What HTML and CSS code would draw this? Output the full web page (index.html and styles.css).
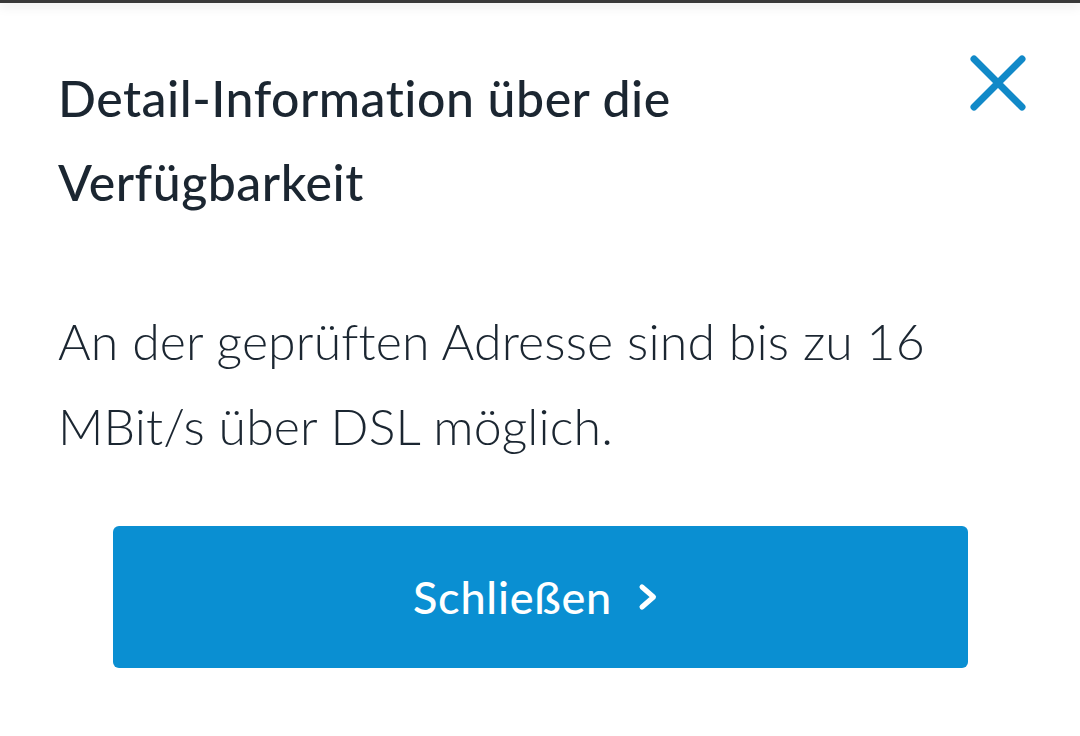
FILE: index.html
```html
<!DOCTYPE html>
<html lang="de">
<head>
<meta charset="utf-8">
<title>Detail-Information</title>
<link rel="stylesheet" href="styles.css">
</head>
<body>
<div class="topbar"></div>
<div class="dialog">
  <button class="close" aria-label="Schließen">
    <svg width="58" height="58" viewBox="0 0 58 58"><path d="M6 4 L54 52 M54 4 L6 52" stroke="#1189c8" stroke-width="7" stroke-linecap="round" fill="none"/></svg>
  </button>
  <h1 class="title">Detail-Information über die Verfügbarkeit</h1>
  <p class="text">An der geprüften Adresse sind bis zu 16 MBit/s über DSL möglich.</p>
  <button class="primary">Schließen
    <svg class="chev" width="20" height="30" viewBox="0 0 20 30"><path d="M4 5 L15.5 15 L4 25" stroke="#fff" stroke-width="5" stroke-linecap="round" stroke-linejoin="round" fill="none"/></svg>
  </button>
</div>
</body>
</html>
```
FILE: styles.css
```css
html, body {
  margin: 0;
  padding: 0;
  background: #fff;
}
body {
  font-family: Lato, "Noto Sans", sans-serif;
  color: #1b2631;
  width: 1080px;
  height: 736px;
  overflow: hidden;
  position: relative;
}
.topbar {
  height: 3px;
  background: #3a3a3a;
  box-shadow: 0 2px 12px rgba(0,0,0,0.18);
}
.dialog {
  position: relative;
  padding: 53px 58px 0 58px;
}
.close {
  position: absolute;
  top: 52px;
  right: 54px;
  width: 58px;
  height: 58px;
  padding: 0;
  border: 0;
  background: none;
}
.close svg { display: block; }
.title {
  margin: 0;
  max-width: 860px;
  font-size: 50px;
  line-height: 84px;
  font-weight: 500;
  letter-spacing: 0.5px;
}
.text {
  margin: 75px 0 0 0;
  font-size: 50px;
  line-height: 85px;
  font-weight: 300;
  letter-spacing: 0.15px;
}
.primary {
  display: flex;
  align-items: center;
  justify-content: center;
  gap: 26px;
  margin: 57px 0 0 55px;
  width: 855px;
  height: 142px;
  border: 0;
  border-radius: 6px;
  background: #0a8fd2;
  color: #fff;
  font-family: Lato, "Noto Sans", sans-serif;
  font-size: 45px;
  font-weight: 500;
  letter-spacing: 0.8px;
  padding: 0 10px 0 0;
}
.chev { display: block; }
```
